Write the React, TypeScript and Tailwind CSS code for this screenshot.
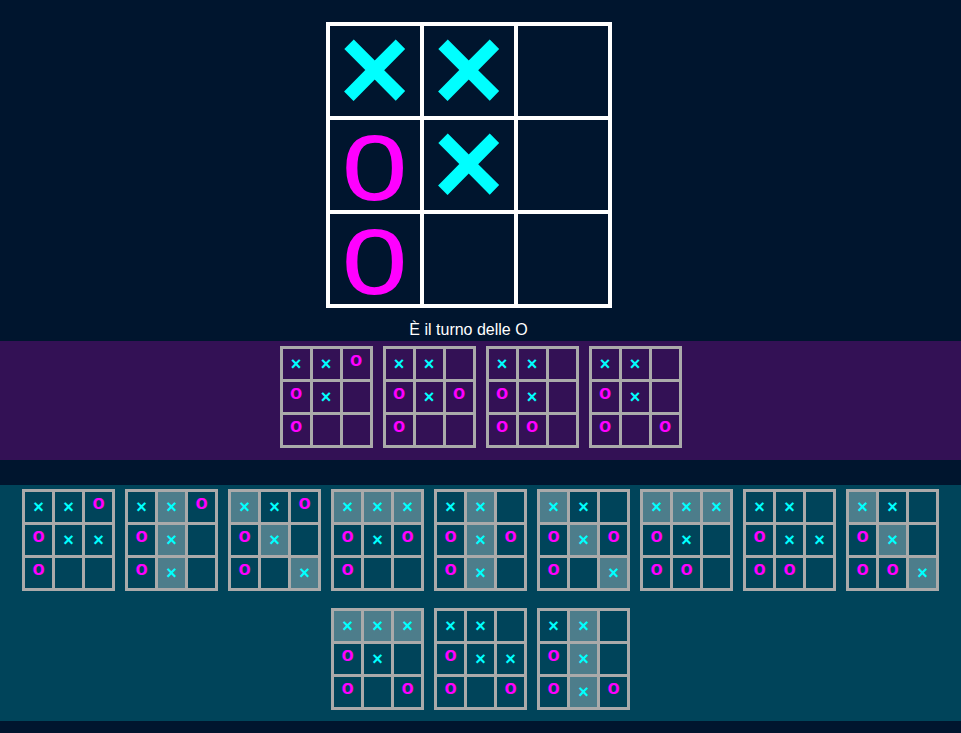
import { useState } from "react";

type Mark = "X" | "O" | ".";

const LINES = [
  [0, 1, 2], [3, 4, 5], [6, 7, 8],
  [0, 3, 6], [1, 4, 7], [2, 5, 8],
  [0, 4, 8], [2, 4, 6],
];

const NEXT_MOVES = ["XXOOX.O..", "XX.OXOO..", "XX.OX.OO.", "XX.OX.O.O"];

const REPLIES = [
  "XXOOXXO..", "XXOOX.OX.", "XXOOX.O.X",
  "XXXOXOO..", "XX.OXOOX.", "XX.OXOO.X",
  "XXXOX.OO.", "XX.OXXOO.", "XX.OX.OOX",
  "XXXOX.O.O", "XX.OXXO.O", "XX.OX.OXO",
];

function winningCells(board: string): number[] {
  const line = LINES.find(([a, b, c]) => board[a] !== "." && board[a] === board[b] && board[b] === board[c]);
  return line ?? [];
}

function MiniBoard({ board, cell, winCell }: { board: string; cell: string; winCell: string }) {
  const won = winningCells(board);
  return (
    <div className="grid grid-cols-[repeat(3,27px)] auto-rows-[30px] gap-[3px] bg-[#aaaaaa] p-[3px]">
      {board.split("").map((mark, i) => (
        <div key={i} className={`flex items-start justify-center ${won.includes(i) ? winCell : cell}`}>
          {mark === "X" && <span className="text-[18px] leading-[30px] font-bold text-[#00ffff]">×</span>}
          {mark === "O" && <span className="text-[20px] leading-[20px] font-bold text-[#ff00ff]">o</span>}
        </div>
      ))}
    </div>
  );
}

export default function App() {
  const [board, setBoard] = useState<Mark[]>("XX.OX.O..".split("") as Mark[]);
  const turn: Mark = board.filter((m) => m !== ".").length % 2 === 0 ? "X" : "O";

  const play = (i: number) => {
    if (board[i] !== ".") return;
    setBoard(board.map((m, k) => (k === i ? turn : m)));
  };

  return (
    <div className="min-h-screen bg-[#00152e] font-['Liberation_Sans',Arial,sans-serif] text-white">
      <main className="flex flex-col items-center pt-[22px] pr-6">
        <div className="grid grid-cols-[repeat(3,90px)] auto-rows-[90px] gap-1 bg-white p-1">
          {board.map((mark, i) => (
            <button
              key={i}
              type="button"
              aria-label={`Casella ${i + 1}`}
              onClick={() => play(i)}
              className="flex items-start justify-center bg-[#00152e]"
            >
              {mark === "X" && <span className="text-[122px] leading-[86px] font-bold text-[#00ffff]">×</span>}
              {mark === "O" && <span className="text-[120px] leading-[77px] text-[#ff00ff]">o</span>}
            </button>
          ))}
        </div>
        <p className="pt-[13px] pb-[2px] text-base leading-[18px]">È il turno delle O</p>
      </main>

      <section aria-label="Mosse possibili" className="flex flex-wrap justify-center gap-x-[10px] gap-y-[17px] bg-[#331155] pt-[5px] pb-3">
        {NEXT_MOVES.map((b) => (
          <MiniBoard key={b} board={b} cell="bg-[#331155]" winCell="bg-[#705888]" />
        ))}
      </section>

      <section aria-label="Risposte possibili" className="mt-[25px] flex flex-wrap justify-center gap-x-[10px] gap-y-[17px] bg-[#00445a] pt-1 pb-[11px]">
        {REPLIES.map((b) => (
          <MiniBoard key={b} board={b} cell="bg-[#00445a]" winCell="bg-[#4d7d8b]" />
        ))}
      </section>
    </div>
  );
}
